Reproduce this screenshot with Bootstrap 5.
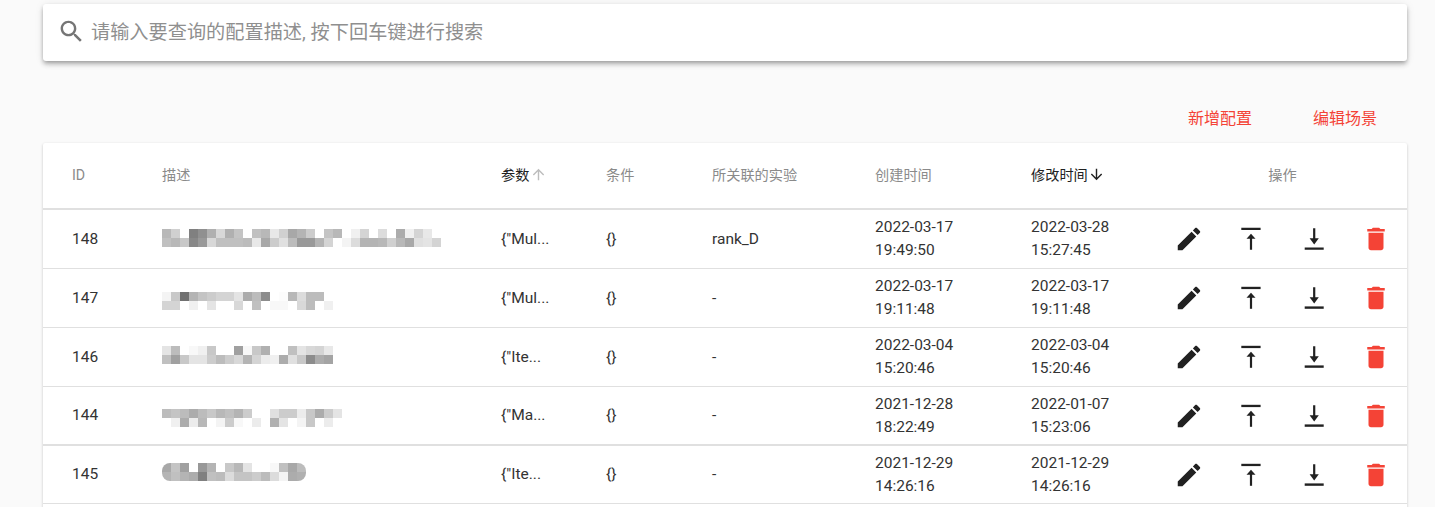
<!DOCTYPE html>
<html lang="zh">
<head>
<meta charset="utf-8">
<title>配置</title>
<link href="https://cdn.jsdelivr.net/npm/bootstrap@5.3.0/dist/css/bootstrap.min.css" rel="stylesheet">
<style>
html,body{height:507px;overflow:hidden}
body{background:#fafafa;font-family:Roboto,"Noto Sans CJK SC",sans-serif;color:#212121}
.page-wrap{padding:4px 28px 0 43px}
.search-bar{height:57px;background:#fff;border-radius:3px;box-shadow:0 2px 4px -1px rgba(0,0,0,.3),0 4px 5px 0 rgba(0,0,0,.14),0 1px 10px 0 rgba(0,0,0,.08);padding-left:14px}
.search-bar svg{width:29px;height:29px;fill:#757575;flex:none;margin-top:-2px}
.search-input{border:0;background:transparent;box-shadow:none!important;font-size:19.2px;padding:2px 0 0 5px;color:#212121;font-family:inherit}
.search-input::placeholder{color:#8f8f8f;opacity:1}
.action-row{height:82px;padding-top:42px}
.action-btn{width:125px;height:32px;padding:0 0 0 1px;border:0;color:#f44336;font-size:16px;line-height:32px}
.action-btn:hover{color:#f44336}
.table-card{background:#fff;border-radius:2px;box-shadow:0 1px 3px rgba(0,0,0,.2),0 1px 1px rgba(0,0,0,.06);overflow:hidden;height:400px}
.cfg-table{table-layout:fixed;width:1364px;margin:0;--bs-table-bg:transparent}
.cfg-table th,.cfg-table td{padding:0;vertical-align:middle;border-bottom:1px solid #e0e0e0}
.cfg-table th{height:66px;border-bottom:2px solid #e0e0e0;font-size:14.2px;font-weight:400;color:#8a8a8a;white-space:nowrap}
.cfg-table th.sorted{color:#212121}
.cfg-table th svg{width:17px;height:17px;vertical-align:-3px;margin-left:-3px}
.cfg-table th.muted svg{fill:#bdbdbd}
.cfg-table th.dark svg{fill:#212121}
.cfg-table td{height:59px;font-size:15.5px;line-height:23px;color:#333;padding-top:1px}
.cfg-table .first-col{padding-left:29px}
.cfg-table th.ops{text-align:center}
.cfg-table .row-thick td{border-bottom-width:2px}
.cfg-table .row-short td{height:58px}
.mosaic{display:block}
.mosaic-a{margin-top:-3px}
.mosaic-b{margin-top:5px}
.mosaic-c{margin-top:-5px}
.mosaic-d{margin-top:4px}
.mosaic-e{margin-top:-6px;border-radius:8px}
.op-btn{width:62.25px;height:36px;padding:0;border:0;background:transparent;display:inline-flex;align-items:center;justify-content:center}
.op-btn svg{width:30px;height:30px;fill:#212121}
.op-btn.del svg{fill:#f44336}
.ops-wrap{display:flex}
</style>
</head>
<body>
<svg width="0" height="0" class="position-absolute">
  <symbol id="i-edit" viewBox="0 0 24 24"><path d="M3 17.25V21h3.75L17.81 9.94l-3.75-3.75L3 17.25zM20.71 7.04c.39-.39.39-1.02 0-1.41l-2.34-2.34c-.39-.39-1.02-.39-1.41 0l-1.83 1.83 3.75 3.75 1.83-1.83z"/></symbol>
  <symbol id="i-del" viewBox="0 0 24 24"><path d="M6 19c0 1.1.9 2 2 2h8c1.1 0 2-.9 2-2V7H6v12zM19 4h-3.5l-1-1h-5l-1 1H5v2h14V4z"/></symbol>
  <symbol id="i-up" viewBox="0 0 30 30"><path d="M5.3 3.8h19.3v2.3H5.3z"/><path d="M13.9 13h2.2v12.8h-2.2z"/><path d="M15 9.8l-4.5 5h9z"/></symbol>
  <symbol id="i-down" viewBox="0 0 30 30"><path d="M5.7 23.4h19v2.4h-19z"/><path d="M14.1 4.2h2.2V16h-2.2z"/><path d="M15.2 20.5l-4.6-6.2h9.2z"/></symbol>
</svg>
<div class="page-wrap">
  <div class="search-bar d-flex align-items-center">
    <svg viewBox="0 0 24 24"><path d="M15.5 14h-.79l-.28-.27C15.41 12.59 16 11.11 16 9.5 16 5.91 13.09 3 9.5 3S3 5.91 3 9.5 5.91 16 9.5 16c1.61 0 3.09-.59 4.23-1.57l.27.28v.79l5 4.99L20.49 19l-4.99-5zm-6 0C7.01 14 5 11.99 5 9.5S7.01 5 9.5 5 14 7.01 14 9.5 11.99 14 9.5 14z"/></svg>
    <input class="form-control search-input" type="text" placeholder="请输入要查询的配置描述, 按下回车键进行搜索">
  </div>
  <div class="action-row d-flex justify-content-end align-items-start">
    <button class="btn action-btn" type="button">新增配置</button>
    <button class="btn action-btn" type="button">编辑场景</button>
  </div>
  <div class="table-card">
    <table class="table cfg-table">
      <colgroup><col style="width:119px"><col style="width:339px"><col style="width:105px"><col style="width:106px"><col style="width:163px"><col style="width:156px"><col style="width:127px"><col style="width:249px"></colgroup>
      <thead>
        <tr>
          <th class="first-col">ID</th><th>描述</th>
          <th class="sorted muted">参数 <svg viewBox="0 0 24 24"><path d="M4 12l1.41 1.41L11 7.83V20h2V7.83l5.58 5.59L20 12l-8-8-8 8z"/></svg></th>
          <th>条件</th><th>所关联的实验</th><th>创建时间</th>
          <th class="sorted dark">修改时间 <svg viewBox="0 0 24 24"><path d="M20 12l-1.41-1.41L13 16.17V4h-2v12.17l-5.58-5.59L4 12l8 8 8-8z"/></svg></th>
          <th class="ops">操作</th>
        </tr>
      </thead>
      <tbody id="rows">
        <tr><td class="first-col">148</td><td><svg class="mosaic mosaic-a" width="290" height="18" data-c="b8 d0 ff 80 90 b0 d8 b0 c4 ff c0 b8 e8 d0 a8 b4 cc ff c4 b8 ff f0 d4 ff dc ff ac f0 d4 e8 ff|c0 b8 c8 88 99 d8 c0 c0 c0 bc e8 a8 cc e0 bc 99 99 b4 d4 ff f4 dc b4 b4 b8 d0 b8 a8 e0 e4 d4"></svg></td><td>{"Mul...</td><td>{}</td><td>rank_D</td><td>2022-03-17<br>19:49:50</td><td>2022-03-28<br>15:27:45</td><td class="op-cell"></td></tr>
        <tr><td class="first-col">147</td><td><svg class="mosaic mosaic-b" width="290" height="18" data-c="f4 c8 70 b4 c4 cc d4 d4 e4 ac bc 8c ff fc b8 dc bc bc ff|d4 d4 ff f0 ff e4 ff ff d8 ff c0 ff f8 f8 ff d8 bc ff f0"></svg></td><td>{"Mul...</td><td>{}</td><td>-</td><td>2022-03-17<br>19:11:48</td><td>2022-03-17<br>19:11:48</td><td class="op-cell"></td></tr>
        <tr><td class="first-col">146</td><td><svg class="mosaic mosaic-c" width="290" height="18" data-c="e4 bc ff f8 f0 c8 ff ff a0 f8 c8 b0 ff ff c0 e4 d8 d4 e8|c0 a0 c8 e4 e4 cc bc cc d8 b4 d4 ec f0 ac e0 c8 8c ac a4"></svg></td><td>{"Ite...</td><td>{}</td><td>-</td><td>2022-03-04<br>15:20:46</td><td>2022-03-04<br>15:20:46</td><td class="op-cell"></td></tr>
        <tr class="row-thick"><td class="first-col">144</td><td><svg class="mosaic mosaic-d" width="290" height="18" data-c="bc c4 bc ac bc c8 b8 c0 b4 cc ff ff e0 cc cc ec c8 ac cc e4|ff f0 ac ec b8 ff f4 cc f8 ff ec ff b0 e4 ff f4 c8 ff ec ff"></svg></td><td>{"Ma...</td><td>{}</td><td>-</td><td>2021-12-28<br>18:22:49</td><td>2022-01-07<br>15:23:06</td><td class="op-cell"></td></tr>
        <tr class="row-short"><td class="first-col">145</td><td><svg class="mosaic mosaic-e" width="144" height="18" data-c="a8 c4 a0 ff 98 b4 ff c8 b8 e4 ff ff f8 c0 a8 bc|b4 c0 b4 ac 80 c0 bc dc c4 c4 cc bc dc f4 ac b0"></svg></td><td>{"Ite...</td><td>{}</td><td>-</td><td>2021-12-29<br>14:26:16</td><td>2021-12-29<br>14:26:16</td><td class="op-cell"></td></tr>
        <tr><td class="first-col">&nbsp;</td><td></td><td></td><td></td><td></td><td></td><td></td><td></td></tr>
      </tbody>
    </table>
  </div>
</div>
<script>
document.querySelectorAll('.mosaic').forEach(function(s){
  var h='';
  s.getAttribute('data-c').split('|').forEach(function(r,y){
    r.split(' ').forEach(function(v,x){
      if(v!=='ff')h+='<rect x="'+x*9+'" y="'+y*9+'" width="9" height="9" fill="#'+v+v+v+'"/>';
    });
  });
  s.innerHTML=h;
});
document.querySelectorAll('.op-cell').forEach(function(c){
  c.innerHTML='<div class="ops-wrap">'+[['edit',''],['up',''],['down',''],['del',' del']].map(function(i){
    return '<button type="button" class="op-btn'+i[1]+'"><svg><use href="#i-'+i[0]+'"/></svg></button>';
  }).join('')+'</div>';
});
</script>
<script src="https://cdn.jsdelivr.net/npm/bootstrap@5.3.0/dist/js/bootstrap.bundle.min.js"></script>
</body>
</html>
